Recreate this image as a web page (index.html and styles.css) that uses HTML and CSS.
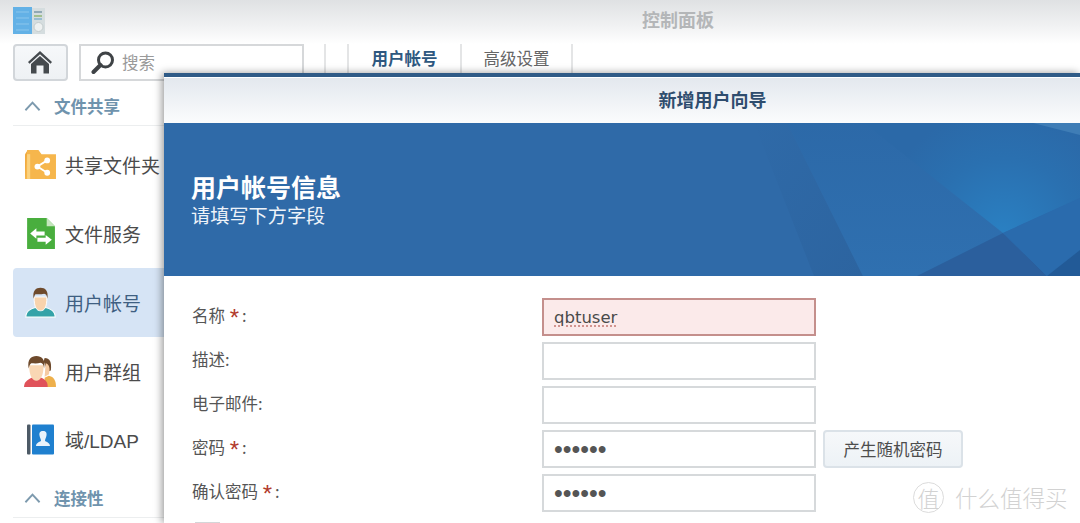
FILE: index.html
```html
<!DOCTYPE html>
<html lang="zh-CN">
<head>
<meta charset="utf-8">
<title>控制面板</title>
<link rel="stylesheet" href="styles.css">
</head>
<body>
<div class="desktop">
  <header class="titlebar">
    <svg class="app-icon" viewBox="0 0 32 27" aria-hidden="true">
      <rect x="0" y="0" width="19" height="27" fill="#63b1e6"/>
      <g stroke="#8cc6ec" stroke-width="1">
        <path d="M3 5h13M3 11h13M3 17h13M3 23h13"/>
      </g>
      <rect x="19" y="1" width="13" height="26" fill="#d5dddf"/>
      <path d="M21 5h8" stroke="#7a96a6" stroke-width="1.500"/>
      <path d="M21 9h8" stroke="#8fb574" stroke-width="1.500"/>
      <path d="M21 12h8" stroke="#84b2cc" stroke-width="1.500"/>
      <circle cx="25.500" cy="20" r="4.500" fill="#eef1f1" stroke="#c4cccd"/>
    </svg>
    <h1 class="app-title">控制面板</h1>
  </header>

  <div class="toolbar">
    <button class="home-btn" type="button" aria-label="主页">
      <svg viewBox="0 0 24 24" aria-hidden="true">
        <path d="M12 1 L24 12 L22.500 13.700 L12 4.200 L1.500 13.700 L0 12 Z" fill="#454a4e"/>
        <path fill-rule="evenodd" d="M12 6 L21 14 V23.500 H3 V14 Z M8.500 15.500 V23.500 H15.500 V15.500 Z" fill="#454a4e"/>
      </svg>
    </button>
    <div class="search">
      <svg viewBox="0 0 24 24" aria-hidden="true">
        <circle cx="14.500" cy="9" r="7" fill="none" stroke="#3f4346" stroke-width="3"/>
        <path d="M9.500 14 L2.500 21" stroke="#3f4346" stroke-width="4" stroke-linecap="round"/>
      </svg>
      <span class="search-text">搜索</span>
    </div>
    <span class="tool-sep"></span>
    <nav class="tabs">
      <span class="tab tab-active">用户帐号</span>
      <span class="tab">高级设置</span>
    </nav>
  </div>

  <aside class="sidebar">
    <div class="section-head">
      <svg class="chevron" viewBox="0 0 18 12" aria-hidden="true"><path d="M1.500 10.500 L9 2.500 L16.500 10.500" fill="none" stroke="#7d9aae" stroke-width="2"/></svg>
      <span>文件共享</span>
    </div>
    <ul class="menu">
      <li class="menu-item">
        <svg class="menu-icon" viewBox="0 0 32 32" aria-hidden="true">
          <path d="M1 6 L3 3 V27 L1 30 Z" fill="#f0a93c"/>
          <path d="M3 2 H14 L17 6 H31 V30 H1 Z" fill="#f6b64c"/>
          <rect x="3" y="6" width="3" height="24" fill="#fbd27f"/>
          <g fill="#fff"><circle cx="22.500" cy="12" r="2.800"/><circle cx="22.500" cy="24" r="2.800"/><circle cx="13" cy="18" r="2.800"/></g>
          <path d="M22.500 12 L13 18 L22.500 24" fill="none" stroke="#fff" stroke-width="1.800"/>
        </svg>
        <span>共享文件夹</span>
      </li>
      <li class="menu-item">
        <svg class="menu-icon" viewBox="0 0 32 32" aria-hidden="true">
          <path d="M3 1 H22 L30 9 V31 H3 Z" fill="#49ae3e"/>
          <path d="M22 1 L30 9 H22 Z" fill="#c5e6bd"/>
          <path d="M6 16 L12 11 V14 H20 V18 H12 V21 Z" fill="#fff"/>
          <path d="M27 22 L21 17.500 V20 H13 V24 H21 V27 Z" fill="#fff"/>
        </svg>
        <span>文件服务</span>
      </li>
      <li class="menu-item menu-item-active">
        <svg class="menu-icon" viewBox="0 0 34 36" aria-hidden="true">
          <path d="M1 34 C1 27 6 25 13 23 H21 C28 25 33 27 33 34 Z" fill="#35a3a8" stroke="#fff" stroke-width="1.200"/>
          <path d="M10 12 C10 24 13 27 17 27 C21 27 24 24 24 12 Z" fill="#f8d3ad" stroke="#fff" stroke-width="1"/>
          <path d="M9.500 14 C8 5 12 2 17 2 C22 2 26 5 24.500 14 C24 10 23 9 21 8.500 C17 9.500 13 9 11.500 9 C10.500 10 10 12 9.500 14 Z" fill="#6e4a2c"/>
        </svg>
        <span>用户帐号</span>
      </li>
      <li class="menu-item">
        <svg class="menu-icon" viewBox="0 0 32 32" aria-hidden="true">
          <path d="M20 3 C25 3 27 7 26 15 L23 16 L19 6 Z" fill="#6e4a2c"/>
          <path d="M21 8 C25 9 25.500 14 24 19 L20 21 Z" fill="#f6cba2"/>
          <path d="M20 31 V22 L24 20 C28 21 31 23 31 31 Z" fill="#eeb04c"/>
          <path d="M0 31 C0 25 5 23 9 21.500 H15 C20 23 23 25 23 31 Z" fill="#e0525a"/>
          <path d="M5 10 C5 20 8 25 12 25 C16 25 19 20 19 10 Z" fill="#f9d7b4"/>
          <path d="M4.500 13 C3 4 7 1 12 1 C17 1 21 4 19.500 13 C19 9 18 8 16 7.500 C13 8.500 9 8 7 8 C5.500 9 5 11 4.500 13 Z" fill="#6e4a2c"/>
        </svg>
        <span>用户群组</span>
      </li>
      <li class="menu-item">
        <svg class="menu-icon" viewBox="0 0 33 33" aria-hidden="true">
          <rect x="3" y="1.500" width="3.500" height="30" rx="1" fill="#4d5a66"/>
          <rect x="8" y="1.500" width="22" height="30" rx="1" fill="#1f80cf"/>
          <path d="M19 8 C22 8 23 10 22.500 12.500 C22 15 21 16.500 21 17.500 C21 19 26 19 26 23 H12 C12 19 17 19 17 17.500 C17 16.500 16 15 15.500 12.500 C15 10 16 8 19 8 Z" fill="#e9f3fb"/>
        </svg>
        <span>域/LDAP</span>
      </li>
    </ul>
    <div class="section-head">
      <svg class="chevron" viewBox="0 0 18 12" aria-hidden="true"><path d="M1.500 10.500 L9 2.500 L16.500 10.500" fill="none" stroke="#7d9aae" stroke-width="2"/></svg>
      <span>连接性</span>
    </div>
  </aside>

  <section class="wizard">
    <div class="wizard-title">新增用户向导</div>
    <div class="banner">
      <svg class="banner-art" viewBox="0 0 916 153" preserveAspectRatio="none" aria-hidden="true">
        <defs>
          <linearGradient id="g-edge" x1="0" y1="0" x2="1" y2="1">
            <stop offset="0" stop-color="#2a5f99" stop-opacity="0"/>
            <stop offset="1" stop-color="#2a5f99" stop-opacity=".55"/>
          </linearGradient>
          <linearGradient id="g-mid" x1="0" y1="0" x2="0" y2="1">
            <stop offset="0" stop-color="#2c69a8"/>
            <stop offset="1" stop-color="#2f70b0"/>
          </linearGradient>
          <radialGradient id="g-up" gradientUnits="userSpaceOnUse" cx="839" cy="110" r="125">
            <stop offset="0" stop-color="#2a80c2"/>
            <stop offset=".6" stop-color="#2a70b0"/>
            <stop offset="1" stop-color="#2b69a8"/>
          </radialGradient>
        </defs>
        <polygon points="590,0 623,0 699,153 650,153" fill="url(#g-edge)"/>
        <polygon points="623,0 916,0 916,153 699,153" fill="url(#g-mid)"/>
        <polygon points="700,0 916,0 916,75 839,110" fill="url(#g-up)"/>
        <polygon points="869,0 916,0 916,12" fill="#3f7db6"/>
        <polygon points="753,153 839,110 883,153" fill="#2b5f9d"/>
        <polygon points="839,110 916,75 916,127 883,153" fill="#2a6bad"/>
        <polygon points="883,153 916,127 916,153" fill="#225a97"/>
      </svg>
      <div class="banner-text">
        <h2 class="banner-title">用户帐号信息</h2>
        <p class="banner-sub">请填写下方字段</p>
      </div>
    </div>
    <form class="form">
      <label class="form-label">名称 <em class="req">*</em>:</label>
      <input class="field field-error" type="text" value="qbtuser">
      <label class="form-label">描述:</label>
      <input class="field" type="text">
      <label class="form-label">电子邮件:</label>
      <input class="field" type="text">
      <label class="form-label">密码 <em class="req">*</em>:</label>
      <div class="field-row">
        <input class="field field-pass" type="password" value="secret">
        <button class="gen-btn" type="button">产生随机密码</button>
      </div>
      <label class="form-label">确认密码 <em class="req">*</em>:</label>
      <input class="field field-pass" type="password" value="secret">
      <span class="check-box"></span>
    </form>
  </section>

  <div class="watermark">
    <span class="wm-seal">值</span>
    <span class="wm-text">什么值得买</span>
  </div>
</div>
</body>
</html>
```

FILE: styles.css
```css
* { box-sizing: border-box; }
html, body { margin: 0; padding: 0; }
body {
  background: #fff;
  font-family: "Noto Sans CJK SC", "Liberation Sans", sans-serif;
  color: #4a4a4a;
}
.desktop {
  position: relative;
  width: 1080px;
  height: 523px;
  overflow: hidden;
  background: #fff;
}

/* title bar */
.titlebar {
  height: 44px;
  padding-left: 13px;
  padding-top: 7px;
  display: flex;
  align-items: flex-start;
  background: linear-gradient(#dfe1e3, #f1f2f3 60%, #fff);
}
.app-icon { width: 32px; height: 27px; flex: none; }
.app-title {
  margin: 0 0 0 597px;
  font-size: 18px;
  line-height: 25px;
  font-weight: 700;
  color: #b4b6b8;
}

/* toolbar */
.toolbar {
  height: 37px;
  padding-left: 13px;
  display: flex;
  align-items: stretch;
}
.home-btn {
  width: 55px;
  padding: 0 1px 1px 0;
  border: 2px solid #d2d6da;
  border-radius: 4px;
  background: linear-gradient(#f6f8fa, #eef1f4);
  display: flex;
  align-items: center;
  justify-content: center;
}
.home-btn svg { width: 24px; height: 24px; }
.search {
  width: 225px;
  margin-left: 11px;
  padding-left: 10px;
  border: 2px solid #d6d8da;
  display: flex;
  align-items: center;
  gap: 7px;
  background: #fff;
}
.search svg { width: 24px; height: 24px; flex: none; }
.search-text { font-size: 16.500px; color: #9a9a9a; padding-bottom: 2px; }
.tool-sep {
  width: 2px;
  height: 30px;
  margin-left: 20px;
  background: #e4e5e6;
}
.tabs {
  display: flex;
  height: 30px;
  margin-left: 21px;
  border-left: 2px solid #e4e5e6;
}
.tab {
  width: 111px;
  border-right: 2px solid #e4e5e6;
  font-size: 16.500px;
  line-height: 28px;
  text-align: center;
  color: #666;
}
.tab-active { width: 113px; font-weight: 700; color: #2e5880; }

/* sidebar */
.sidebar {
  width: 164px;
  padding-left: 13px;
  margin-top: 6px;
}
.section-head {
  height: 39px;
  padding-left: 11px;
  border-bottom: 1px solid #eceeef;
  display: flex;
  align-items: center;
  gap: 13px;
  font-size: 16.500px;
  font-weight: 700;
  color: #6f93ad;
}
.chevron { width: 17px; height: 12px; flex: none; }
.menu {
  list-style: none;
  margin: 4px 0 6px;
  padding: 0;
}
.menu-item {
  height: 69px;
  padding-left: 11px;
  display: flex;
  align-items: center;
  font-family: "Liberation Sans", "Noto Sans CJK SC", sans-serif;
  font-size: 19px;
  white-space: nowrap;
  color: #4b4b4b;
}
.menu-item:nth-child(n+4) { height: 68px; }
.menu-item-active {
  background: #d6e4f5;
  border-radius: 4px 0 0 4px;
  color: #3f5f82;
}
.menu-icon {
  width: 33px;
  height: 33px;
  flex: none;
  margin-right: 8px;
}

/* wizard window */
.wizard {
  position: absolute;
  left: 164px;
  top: 73px;
  right: 0;
  bottom: 0;
  background: #fff;
  border-top: 4px solid #2f5b87;
  box-shadow: -2px 0 8px rgba(0, 0, 0, .4);
}
.wizard-title {
  height: 46px;
  font-size: 18px;
  line-height: 43px;
  font-weight: 700;
  text-align: center;
  color: #2f4d6e;
  padding-left: 181px;
  background: linear-gradient(#e3e8ee, #fbfcfd);
  border-top: 1px solid #fff;
}
.banner {
  position: relative;
  height: 153px;
  background: #2f6aa8;
}
.banner-art {
  position: absolute;
  inset: 0;
  width: 100%;
  height: 100%;
}
.banner-text {
  position: relative;
  padding: 46px 0 0 27px;
  color: #fff;
}
.banner-title {
  margin: 0;
  font-size: 25px;
  line-height: 34px;
  font-weight: 700;
}
.banner-sub {
  margin: 0;
  font-size: 19.200px;
  line-height: 24px;
  color: #eef3f9;
}

/* form */
.form {
  padding: 22px 0 0 28px;
  display: grid;
  grid-template-columns: 350px 1fr;
  grid-auto-rows: 38px;
  row-gap: 6px;
  align-items: center;
}
.form-label {
  font-size: 16.500px;
  color: #555;
  padding-bottom: 4px;
}
.req {
  font-family: "Liberation Sans", sans-serif;
  font-size: 24px;
  line-height: 0;
  vertical-align: -4px;
  font-style: normal;
  color: #b23a2c;
  margin: 0 3px 0 1px;
}
.field {
  width: 274px;
  height: 38px;
  padding: 0 10px;
  border: 2px solid #d6d9db;
  background: #fff;
  font-family: "DejaVu Sans", sans-serif;
  font-size: 16.500px;
  color: #4a4a4a;
  outline: none;
  border-radius: 0;
}
.field-error {
  border-color: #c48f8c;
  background: #fbeaea;
  text-decoration: underline dotted #c9827c;
  text-underline-offset: 3px;
}
.field-pass {
  font-family: "Liberation Sans", sans-serif;
  font-size: 25px;
  color: #555;
}
.field-row { display: flex; gap: 7px; }
.gen-btn {
  width: 140px;
  height: 38px;
  padding: 0;
  border: 2px solid #dbe2e8;
  border-radius: 4px;
  background: linear-gradient(#f6f8fa, #edf2f6);
  font-family: inherit;
  font-size: 16.500px;
  color: #4d4d4d;
}
.check-box {
  width: 25px;
  height: 25px;
  margin-left: 3px;
  align-self: start;
  margin-top: 4px;
  border: 2px solid #d4d6d8;
}

/* watermark over the page */
.watermark {
  position: absolute;
  left: 913px;
  top: 482px;
  display: flex;
  align-items: center;
  gap: 11px;
  color: #d2d2d2;
}
.wm-seal {
  width: 31px;
  height: 31px;
  border: 1px solid #dcdcdc;
  border-radius: 50%;
  font-size: 22px;
  font-weight: 300;
  line-height: 28px;
  text-align: center;
}
.wm-text {
  font-size: 22.500px;
  font-weight: 300;
  line-height: 31px;
}
```
